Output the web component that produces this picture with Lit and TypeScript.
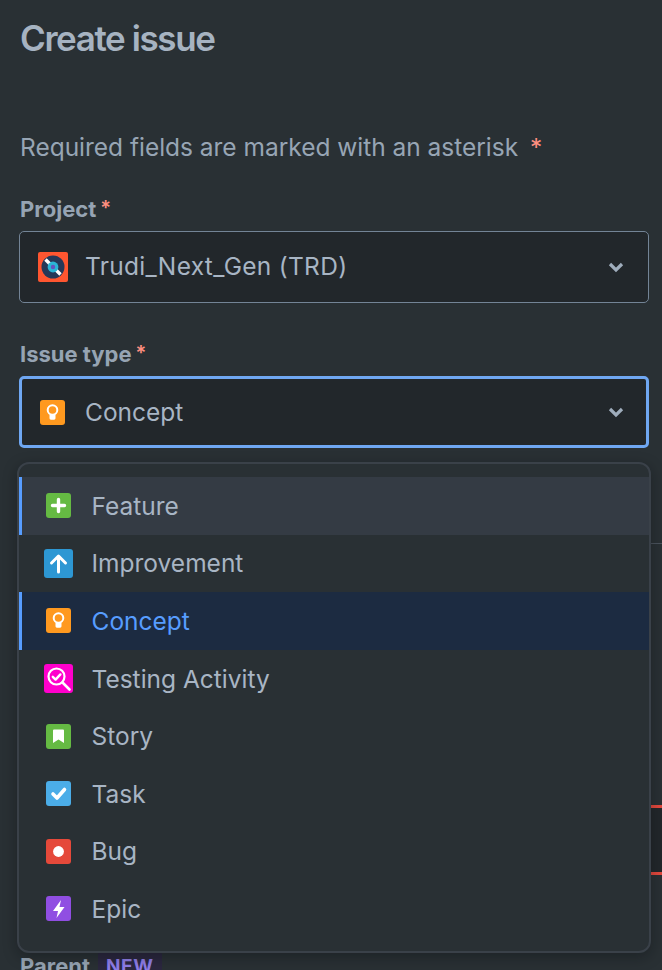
import { LitElement, html, css, svg } from "lit";
import { customElement } from "lit/decorators.js";

const icons: Record<string, unknown> = {
  feature: svg`<rect width="25" height="25" rx="3" fill="#65ba43"/><path d="M12.5 6.500v12M6.500 12.500h12" stroke="#fff" stroke-width="3.400" stroke-linecap="round"/>`,
  improvement: svg`<rect x="-2" y="-2" width="29" height="29" rx="3" fill="#2d97d3"/><path d="M12.500 21V5.500M5.500 12l7-7 7 7" fill="none" stroke="#fff" stroke-width="3" stroke-linecap="round" stroke-linejoin="round"/>`,
  concept: svg`<rect width="25" height="25" rx="3" fill="#ff991f"/><circle cx="12.500" cy="10" r="4.800" fill="none" stroke="#fff" stroke-width="2"/><path d="M9.500 14.500h6v3.800a1.400 1.400 0 0 1-1.400 1.400h-3.200a1.400 1.400 0 0 1-1.400-1.400z" fill="#fff"/>`,
  testing: svg`<rect x="-2" y="-2" width="29" height="29" rx="3" fill="#ff00cc"/><circle cx="10.500" cy="10.500" r="8" fill="none" stroke="#fff" stroke-width="2.200"/><path d="M16.500 16.500l7 7" stroke="#fff" stroke-width="2.600" stroke-linecap="round"/><path d="M6.800 10.800l2.800 2.800 4.800-5.200" fill="none" stroke="#fff" stroke-width="2.400" stroke-linecap="round" stroke-linejoin="round"/>`,
  story: svg`<rect width="25" height="25" rx="3" fill="#65ba43"/><path d="M7 6.500a1 1 0 0 1 1-1h9a1 1 0 0 1 1 1v12.500l-5.500-3.600L7 19z" fill="#fff"/>`,
  task: svg`<rect width="25" height="25" rx="3" fill="#4bade8"/><path d="M7 13l4 4 7.500-8.500" fill="none" stroke="#fff" stroke-width="3.600" stroke-linecap="round" stroke-linejoin="round"/>`,
  bug: svg`<rect width="25" height="25" rx="3" fill="#e5493a"/><circle cx="12.500" cy="12.500" r="5.400" fill="#fff"/>`,
  epic: svg`<rect width="25" height="25" rx="3" fill="#904ee2"/><path d="M15 4l-8 11h5l-1.500 7L18.500 11h-5z" fill="#fff"/>`,
};

const items = [
  { key: "feature", label: "Feature", cls: "hover" },
  { key: "improvement", label: "Improvement", cls: "" },
  { key: "concept", label: "Concept", cls: "selected" },
  { key: "testing", label: "Testing Activity", cls: "" },
  { key: "story", label: "Story", cls: "" },
  { key: "task", label: "Task", cls: "" },
  { key: "bug", label: "Bug", cls: "" },
  { key: "epic", label: "Epic", cls: "" },
];

const chevron = html`<svg class="chev" width="16" height="12" viewBox="0 0 16 12"><path d="M2 3l6 6 6-6" fill="none" stroke="#9fadbc" stroke-width="3.200"/></svg>`;

@customElement("app-root")
export class AppRoot extends LitElement {
  static styles = css`
    :host { display: block; width: 662px; height: 970px; overflow: hidden; background: #293034; font-family: Inter, "Noto Sans", sans-serif; color: #a3b0bf; }
    .page { display: flex; flex-direction: column; padding: 0 13px 0 19px; }
    h1 { margin: 17px 0 0; height: 42px; line-height: 42px; font-size: 35px; font-weight: 600; letter-spacing: -1.4px; color: #a6b3c1; padding-left: 1px; }
    .req { margin: 70px 0 0; height: 36px; line-height: 36px; font-size: 24.5px; letter-spacing: -0.02px; padding-left: 1px; color: #97a5b4; }
    .req b { color: #ff8f80; font-weight: 400; margin-left: 5px; }
    label { display: block; font-weight: 700; font-size: 22px; line-height: 28px; height: 30px; padding-left: 1px; color: #96a4b3; }
    label b { color: #ff8f80; font-weight: 600; font-size: 20px; margin-left: 4px; vertical-align: 2px; }
    .f1 { margin-top: 29px; }
    .f2 { margin-top: 36px; position: relative; }
    .sel { display: flex; align-items: center; box-sizing: border-box; background: #22272b; border: 1px solid #738496; border-radius: 5px; height: 72px; margin-top: 7px; padding: 0 24px 0 18px; font-size: 24.5px; color: #a8b5c4; }
    .sel.focus { border: 3px solid #6fa7f2; height: 72px; margin-top: 7px; padding: 0 22px 0 18px; }
    .sel span { flex: 1; }
    .sel .name { letter-spacing: 0.3px; line-height: 28px; padding-bottom: 2px; }
    .pic { margin-right: 17px; display: block; flex: none; }
    .sel.focus .ic { margin-right: 20px; }
    .ic { display: block; flex: none; overflow: visible; }
    .menu { position: absolute; z-index: 2; left: -2px; right: -2px; top: 123px; box-sizing: border-box; height: 491px; background: #293034; border: 2px solid #3a4149; border-radius: 12px; padding: 13px 0; box-shadow: 0 4px 14px rgba(10, 12, 14, 0.35); overflow: hidden; }
    .item { display: flex; align-items: center; height: 57.6px; padding-left: 23.5px; font-size: 24.5px; color: #a8b5c4; border-left: 3.5px solid transparent; }
    .item .ic { margin-right: 21px; }
    .item.hover { background: #343b44; border-left-color: #579dff; }
    .item.selected { background: #1c2b41; border-left-color: #579dff; color: #579dff; }
    .below { margin-top: 95px; border-top: 1px solid #4a525c; height: 261px; margin-right: -13px; }
    .err { height: 70px; background: #22272b; border-top: 3px solid #e2483d; border-bottom: 3px solid #e2483d; margin-right: -13px; box-sizing: border-box; }
    .parent { display: flex; align-items: center; gap: 8px; margin-top: 77px; }
    .parent label { flex: none; }
    .tag { font-size: 19px; font-weight: 700; color: #8f7ee7; background: #2b273f; padding: 0 8px; line-height: 30px; border-radius: 3px; letter-spacing: 0.6px; }
  `;

  render() {
    return html`<div class="page">
      <h1>Create issue</h1>
      <p class="req">Required fields are marked with an asterisk <b>*</b></p>
      <div class="f1">
        <label>Project<b>*</b></label>
        <div class="sel">
          <svg class="pic" width="30" height="30" viewBox="0 0 30 30">
            <rect width="30" height="30" rx="2" fill="#ff5630"/>
            <circle cx="15" cy="15" r="11.5" fill="#253858"/>
            <path d="M7.5 7.5l15 15" stroke="#fff" stroke-width="3.4"/>
            <circle cx="15" cy="15" r="5.4" fill="#2ab5d6"/>
            <circle cx="15" cy="15" r="2.2" fill="#6554c0"/>
          </svg>
          <span class="name">Trudi_Next_Gen (TRD)</span>
          ${chevron}
        </div>
      </div>
      <div class="f2">
        <label>Issue type<b>*</b></label>
        <div class="sel focus">
          <svg class="ic" width="25" height="25" viewBox="0 0 25 25">${icons.concept}</svg>
          <span>Concept</span>
          ${chevron}
        </div>
        <div class="menu">
          ${items.map(
            (i) => html`<div class="item ${i.cls}">
              <svg class="ic" width="25" height="25" viewBox="0 0 25 25">${icons[i.key]}</svg>${i.label}
            </div>`
          )}
        </div>
      </div>
      <div class="below"></div>
      <div class="err"></div>
      <div class="parent"><label>Parent</label><span class="tag">NEW</span></div>
    </div>`;
  }
}
